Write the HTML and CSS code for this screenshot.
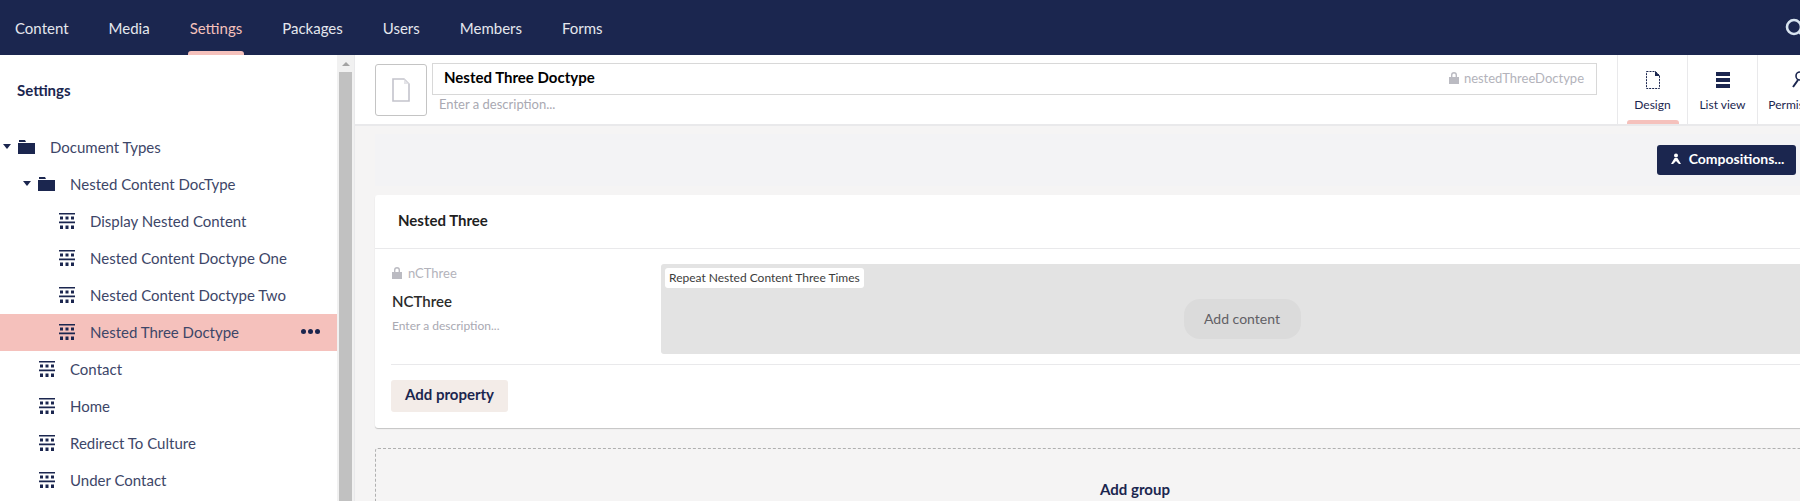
FILE: index.html
```html
<!DOCTYPE html>
<html lang="en">
<head>
    <meta charset="UTF-8">
    <meta name="viewport" content="width=device-width, initial-scale=1.0">
    <title>Settings</title>
    <link rel="stylesheet" href="styles.css">
</head>
<body>
    <div class="topbar">
        <ul class="sections">
            <li>Content</li>
            <li>Media</li>
            <li class="active">Settings</li>
            <li>Packages</li>
            <li>Users</li>
            <li>Members</li>
            <li>Forms</li>
        </ul>
        <svg class="search" viewBox="0 0 24 24"><circle cx="9" cy="9" r="7" fill="none" stroke="#d8e4f0" stroke-width="2.6"/><path d="M14 14l8 8" stroke="#d8e4f0" stroke-width="2.6"/></svg>
    </div>

    <div class="main">
        <div class="sidebar">
            <h2 class="sidebar-title">Settings</h2>
            <ul class="tree">
                <li class="level-0"><span class="caret"></span><svg class="icon-folder" viewBox="0 0 17 15"><path d="M0 4h17v11H0zM1 1h6l1 2H1z" fill="#1b264f"/></svg>Document Types</li>
                <li class="level-1"><span class="caret"></span><svg class="icon-folder" viewBox="0 0 17 15"><path d="M0 4h17v11H0zM1 1h6l1 2H1z" fill="#1b264f"/></svg>Nested Content DocType</li>
                <li class="level-2"><svg class="icon-doctype" viewBox="0 0 16 16"><use href="#doctype"/></svg>Display Nested Content</li>
                <li class="level-2"><svg class="icon-doctype" viewBox="0 0 16 16"><use href="#doctype"/></svg>Nested Content Doctype One</li>
                <li class="level-2"><svg class="icon-doctype" viewBox="0 0 16 16"><use href="#doctype"/></svg>Nested Content Doctype Two</li>
                <li class="level-2 current"><svg class="icon-doctype" viewBox="0 0 16 16"><use href="#doctype"/></svg>Nested Three Doctype<span class="dots"><i></i><i></i><i></i></span></li>
                <li class="leaf"><svg class="icon-doctype" viewBox="0 0 16 16"><use href="#doctype"/></svg>Contact</li>
                <li class="leaf"><svg class="icon-doctype" viewBox="0 0 16 16"><use href="#doctype"/></svg>Home</li>
                <li class="leaf"><svg class="icon-doctype" viewBox="0 0 16 16"><use href="#doctype"/></svg>Redirect To Culture</li>
                <li class="leaf"><svg class="icon-doctype" viewBox="0 0 16 16"><use href="#doctype"/></svg>Under Contact</li>
            </ul>
        </div>

        <div class="scrollbar">
            <div class="scroll-arrow"></div>
            <div class="scroll-thumb"></div>
        </div>

        <div class="editor">
            <div class="editor-header">
                <div class="icon-box">
                    <svg viewBox="0 0 18 24" width="18" height="24"><path d="M1 1h11l5 5v17H1z" fill="#fff" stroke="#c4c4cc" stroke-width="1.6"/><path d="M12 1v5h5" fill="#e4e4e8"/></svg>
                </div>
                <div class="name-col">
                    <div class="name-input">
                        <span class="name">Nested Three Doctype</span>
                        <span class="alias"><svg class="lock" viewBox="0 0 10 12"><use href="#lock"/></svg>nestedThreeDoctype</span>
                    </div>
                    <div class="description">Enter a description...</div>
                </div>
                <div class="tabs">
                    <div class="tab active">
                        <svg viewBox="0 0 14 18" width="14" height="18"><path d="M.5.5h9l4 4v13H.5z" fill="none" stroke="#1b264f" stroke-dasharray="2 1"/><path d="M9 0l5 5H9z" fill="#1b264f"/></svg>
                        <span>Design</span>
                    </div>
                    <div class="tab">
                        <svg viewBox="0 0 14 18" width="14" height="18"><path d="M0 1h14v4H0zM0 7h14v4H0zM0 13h14v4H0z" fill="#1b264f"/></svg>
                        <span>List view</span>
                    </div>
                    <div class="tab tab-wide">
                        <svg viewBox="0 0 18 18" width="18" height="18"><circle cx="9" cy="5" r="4" fill="none" stroke="#1b264f" stroke-width="1.6"/><path d="M7 9l-5 7M11 9l5 7" stroke="#1b264f" stroke-width="2"/></svg>
                        <span>Permissions</span>
                    </div>
                </div>
            </div>

            <div class="editor-body">
                <div class="toolbar">
                    <button class="compositions">
                        <svg viewBox="0 0 10 12" width="10" height="12"><circle cx="5" cy="2.4" r="2" fill="#fff"/><path d="M3.6 5h2.8L10 11H8L5 8l-3 3H0z" fill="#fff"/></svg>
                        Compositions...
                    </button>
                </div>

                <div class="card">
                    <div class="card-title">Nested Three</div>
                    <div class="card-body">
                        <div class="property">
                            <div class="property-info">
                                <div class="property-alias"><svg class="lock" viewBox="0 0 10 12"><use href="#lock"/></svg>nCThree</div>
                                <div class="property-name">NCThree</div>
                                <div class="property-desc">Enter a description...</div>
                            </div>
                            <div class="property-editor">
                                <span class="editor-label">Repeat Nested Content Three Times</span>
                                <button class="add-content">Add content</button>
                            </div>
                        </div>
                        <button class="add-property">Add property</button>
                    </div>
                </div>

                <div class="add-group">Add group</div>
            </div>
        </div>
    </div>

    <svg class="defs" width="0" height="0">
        <symbol id="doctype" viewBox="0 0 16 16">
            <path d="M0 0h16v1.6H0zM1 3.6h3v3H1zM6.5 3.6h3v3h-3zM12 3.6h3v3h-3zM0 8.6h16v1.6H0zM1 12.6h3V16H1zM6.5 12.6h3V16h-3zM12 12.6h3V16h-3z" fill="#1b264f"/>
        </symbol>
        <symbol id="lock" viewBox="0 0 10 12">
            <path d="M0 5h10v7H0zM2 5V3a3 3 0 0 1 6 0v2H6.6V3a1.6 1.6 0 0 0-3.2 0v2z" fill="#bbbbc2"/>
        </symbol>
    </svg>
</body>
</html>
```

FILE: styles.css
```css
* {
    margin: 0;
    padding: 0;
    box-sizing: border-box;
}

html, body {
    height: 100%;
    overflow: hidden;
}

body {
    font-family: 'Lato', sans-serif;
    background-color: #fff;
    color: #1b264f;
}

.defs {
    position: absolute;
}

.topbar {
    height: 55px;
    background-color: #1b264f;
    display: flex;
    align-items: center;
    justify-content: space-between;
}

.sections {
    list-style: none;
    display: flex;
    height: 100%;
}

.sections li {
    padding: 0 20px;
    display: flex;
    align-items: center;
    font-size: 15px;
    color: #e5e7ee;
    position: relative;
}

.sections li:first-child {
    padding-left: 15px;
}

.sections li.active {
    color: #f5c1bc;
}

.sections li.active::after {
    content: '';
    position: absolute;
    left: 18px;
    right: 18px;
    bottom: 0;
    height: 4px;
    background-color: #f5c1bc;
    border-radius: 3px 3px 0 0;
}

.search {
    width: 24px;
    height: 24px;
    flex-shrink: 0;
    margin: 5px -9px 0 0;
}

.main {
    display: flex;
    height: 446px;
}

.sidebar {
    width: 337px;
    flex-shrink: 0;
}

.sidebar-title {
    font-size: 15px;
    font-weight: 700;
    line-height: 18px;
    padding: 26px 0 30px 17px;
}

.tree {
    list-style: none;
}

.tree li {
    height: 37px;
    padding-bottom: 2px;
    display: flex;
    align-items: center;
    font-size: 15px;
    color: #3d4668;
    position: relative;
}

.tree .level-0 {
    padding-left: 3px;
}

.tree .level-1 {
    padding-left: 23px;
}

.tree .level-2 {
    padding-left: 58px;
}

.tree .leaf {
    padding-left: 38px;
}

.tree li.current {
    background-color: #f5c1bc;
}

.caret {
    width: 0;
    height: 0;
    border-left: 4px solid transparent;
    border-right: 4px solid transparent;
    border-top: 5px solid #1b264f;
    margin-right: 7px;
}

.icon-folder {
    width: 17px;
    height: 15px;
    margin-right: 15px;
    flex-shrink: 0;
}

.icon-doctype {
    width: 16px;
    height: 16px;
    margin: 0 15px 0 1px;
    flex-shrink: 0;
}

.dots {
    position: absolute;
    left: 301px;
    display: flex;
    gap: 2px;
}

.dots i {
    width: 5px;
    height: 5px;
    border-radius: 50%;
    background-color: #1b264f;
}

.scrollbar {
    width: 17px;
    flex-shrink: 0;
    background-color: #f1f1f1;
    display: flex;
    flex-direction: column;
    align-items: center;
}

.scroll-arrow {
    height: 17px;
    display: flex;
    align-items: center;
}

.scroll-arrow::before {
    content: '';
    border-left: 4px solid transparent;
    border-right: 4px solid transparent;
    border-bottom: 4px solid #a3a3a3;
}

.scroll-thumb {
    flex: 1;
    width: 13px;
    background-color: #c1c1c1;
}

.editor {
    flex: 1;
    min-width: 0;
    overflow: hidden;
    background-color: #f5f4f4;
    border-left: 1px solid #e9e9eb;
}

.editor-header {
    height: 71px;
    background-color: #fff;
    border-bottom: 2px solid #e9e9eb;
    display: flex;
    padding-left: 20px;
}

.icon-box {
    width: 52px;
    height: 52px;
    margin-top: 9px;
    border: 1px solid #c4c4c4;
    border-radius: 3px;
    display: flex;
    align-items: center;
    justify-content: center;
    flex-shrink: 0;
}

.name-col {
    width: 1165px;
    margin: 8px 20px 0 5px;
    flex-shrink: 0;
}

.name-input {
    height: 32px;
    border: 1px solid #d8d8d8;
    display: flex;
    align-items: center;
    justify-content: space-between;
    padding: 0 12px 2px 11px;
}

.name {
    font-size: 15px;
    font-weight: 700;
    color: #000;
    padding-bottom: 2px;
}

.alias {
    font-size: 13px;
    color: #b3b3bb;
    display: flex;
    align-items: center;
}

.lock {
    width: 10px;
    height: 12px;
    margin-right: 5px;
}

.description {
    font-size: 13px;
    color: #a9a9b2;
    padding-left: 7px;
    line-height: 18px;
}

.tabs {
    display: flex;
    flex-shrink: 0;
}

.tab {
    width: 70px;
    height: 69px;
    border-left: 1px solid #e9e9eb;
    display: flex;
    flex-direction: column;
    align-items: center;
    padding-top: 16px;
    font-size: 12px;
    position: relative;
    flex-shrink: 0;
}

.tab span {
    margin-top: 8px;
    line-height: 16px;
}

.tab-wide {
    width: 84px;
}

.tab.active::after {
    content: '';
    position: absolute;
    left: 9px;
    right: 8px;
    bottom: 0;
    height: 4px;
    background-color: #f5c1bc;
    border-radius: 3px 3px 0 0;
}

.editor-body {
    width: 1560px;
    padding: 8px 20px 0;
}

.toolbar {
    height: 52px;
    background-color: #f3f3f5;
    display: flex;
    align-items: center;
    padding: 0 0 1px 1282px;
    margin-bottom: 9px;
}

.compositions {
    width: 139px;
    height: 30px;
    padding: 0 0 2px 2px;
    background-color: #1b264f;
    color: #fff;
    border: none;
    border-radius: 3px;
    font-family: inherit;
    font-size: 14px;
    font-weight: 700;
    display: flex;
    align-items: center;
    justify-content: center;
    gap: 8px;
    flex-shrink: 0;
}

.card {
    background-color: #fff;
    border-radius: 3px;
    box-shadow: 0 1px 1px rgba(0, 0, 0, 0.2);
    height: 233px;
}

.card-title {
    height: 54px;
    border-bottom: 1px solid #e9e9eb;
    font-size: 15px;
    font-weight: 700;
    color: #1f1f1f;
    padding: 16px 0 0 23px;
    line-height: 18px;
}

.card-body {
    padding: 15px 16px 0;
}

.property {
    display: flex;
    height: 101px;
    border-bottom: 1px solid #e9e9eb;
}

.property-info {
    width: 270px;
    padding-left: 1px;
    flex-shrink: 0;
}

.property-alias {
    font-size: 13px;
    color: #b3b3bb;
    display: flex;
    align-items: center;
    height: 18px;
}

.property-alias .lock {
    margin-right: 6px;
}

.property-name {
    font-size: 15px;
    font-weight: 600;
    color: #2b2b2b;
    margin-top: 10px;
    line-height: 18px;
}

.property-desc {
    font-size: 12px;
    color: #a9a9b2;
    margin-top: 8px;
    line-height: 16px;
}

.property-editor {
    width: 1162px;
    height: 90px;
    background-color: #e3e3e3;
    border-radius: 3px;
    position: relative;
    display: flex;
    align-items: center;
    justify-content: center;
}

.editor-label {
    position: absolute;
    top: 4px;
    left: 4px;
    background-color: #fff;
    border-radius: 3px;
    font-size: 12px;
    line-height: 20px;
    padding: 0 4px;
    color: #3c3c3c;
}

.add-content {
    width: 117px;
    height: 40px;
    margin-top: 20px;
    padding-bottom: 2px;
    border: none;
    border-radius: 16px;
    background-color: #dbdbdb;
    color: #616065;
    font-family: inherit;
    font-size: 14px;
}

.add-property {
    display: block;
    width: 117px;
    height: 32px;
    margin-top: 15px;
    padding-bottom: 4px;
    border: none;
    border-radius: 3px;
    background-color: #f3ece8;
    color: #1b264f;
    font-family: inherit;
    font-size: 15px;
    font-weight: 700;
}

.add-group {
    margin-top: 20px;
    height: 90px;
    border: 1px dashed #b0b0b0;
    border-radius: 3px;
    display: flex;
    justify-content: center;
    padding-top: 31px;
    font-size: 15px;
    font-weight: 700;
}
```
